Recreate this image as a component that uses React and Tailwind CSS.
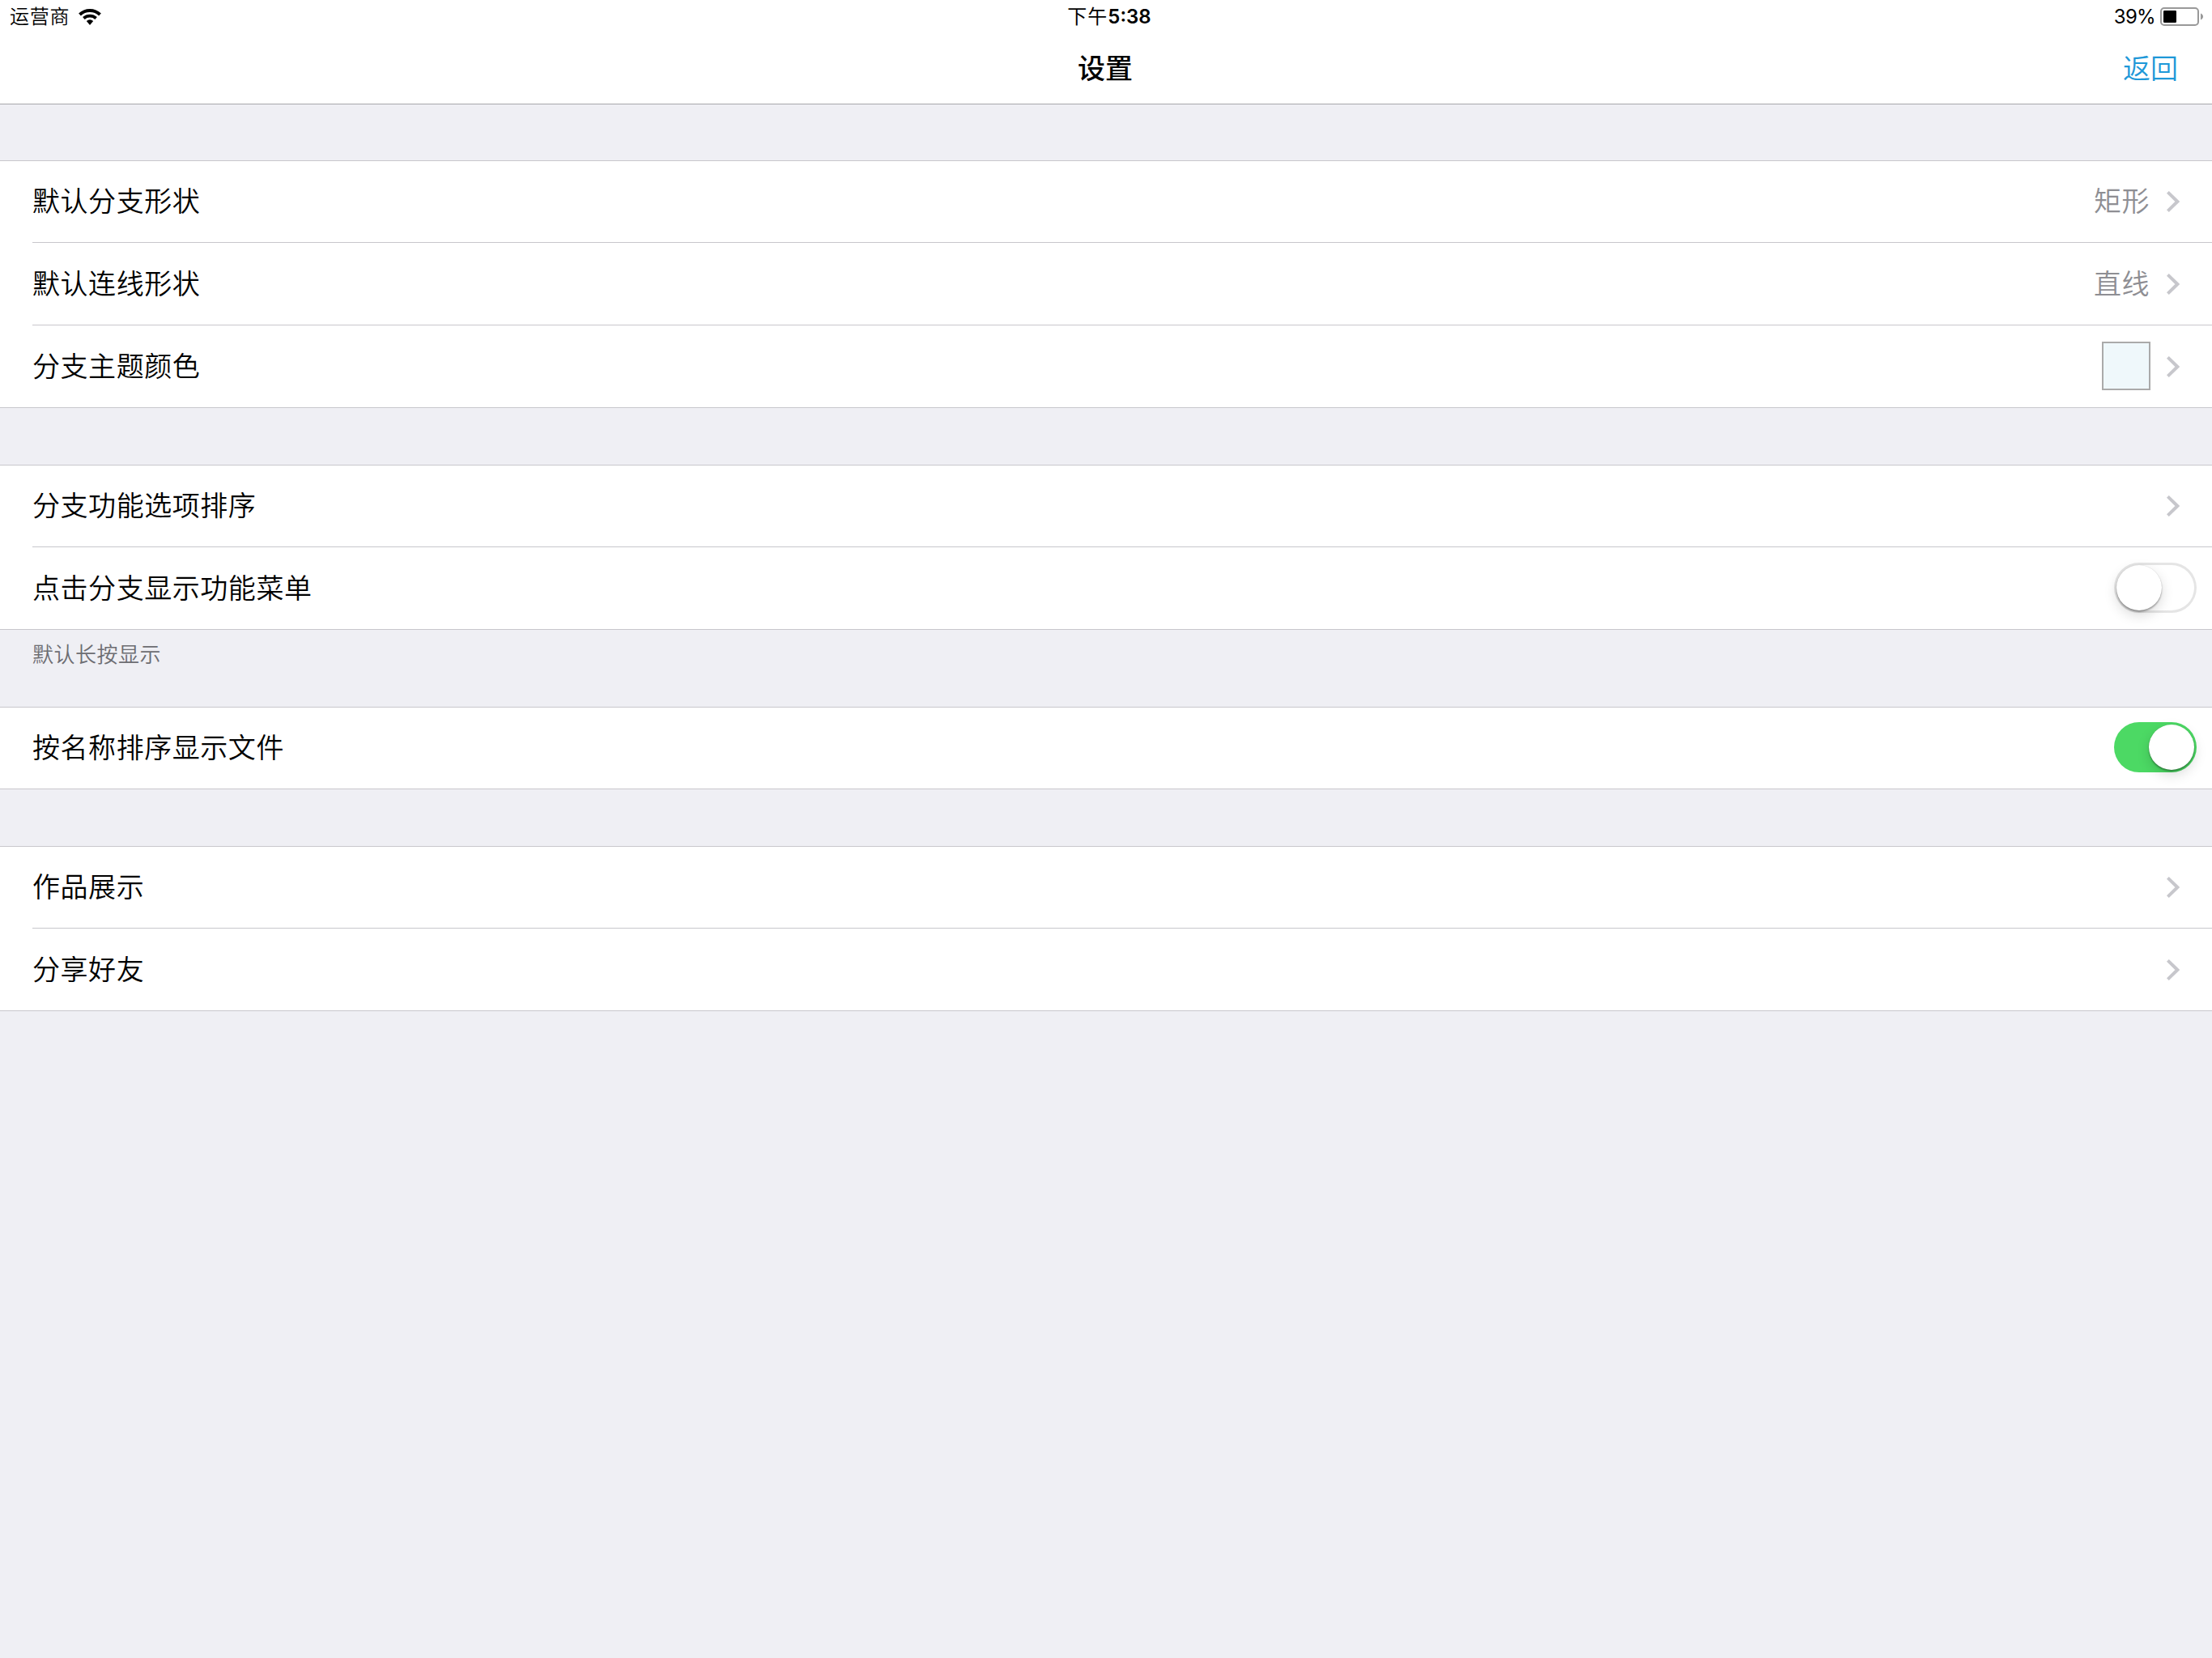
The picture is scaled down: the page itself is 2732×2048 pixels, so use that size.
const groups = [
  {
    className: 'mt-[69px]',
    rows: [
      { label: '默认分支形状', value: '矩形', chevron: true },
      { label: '默认连线形状', value: '直线', chevron: true },
      { label: '分支主题颜色', swatch: true, chevron: true },
    ],
  },
  {
    className: 'mt-[70px]',
    footer: '默认长按显示',
    rows: [
      { label: '分支功能选项排序', chevron: true },
      { label: '点击分支显示功能菜单', toggle: 'off' },
    ],
  },
  { className: '', rows: [{ label: '按名称排序显示文件', toggle: 'on' }] },
  {
    className: 'mt-[70px]',
    rows: [
      { label: '作品展示', chevron: true },
      { label: '分享好友', chevron: true },
    ],
  },
]

function WifiIcon() {
  return (
    <svg width="28" height="20" viewBox="0 0 28 20" fill="none" stroke="#000">
      <path d="M1.5 7.05A18 18 0 0 1 26.5 7.05" strokeWidth="4" />
      <path d="M6.37 11.5A11.4 11.4 0 0 1 21.63 11.5" strokeWidth="3.8" />
      <path d="M9.8 15A6.5 6.5 0 0 1 18.2 15L14 20Z" fill="#000" stroke="none" />
    </svg>
  )
}

function BatteryIcon() {
  return (
    <svg width="54" height="24" viewBox="0 0 54 24" fill="none">
      <rect x="1" y="1" width="46" height="21" rx="4" stroke="#999" strokeWidth="2" />
      <rect x="4" y="4" width="16" height="15" rx="1.2" fill="#000" />
      <path d="M50 7.5C54 9 54 14 50 15.5Z" fill="#999" />
    </svg>
  )
}

function Chevron() {
  return (
    <svg className="mt-0.5" width="16" height="26" viewBox="0 0 16 26" fill="none">
      <path d="M1.4 1.4L13.3 13L1.4 24.6" stroke="#c7c7cc" strokeWidth="4" />
    </svg>
  )
}

function Switch({ on }) {
  return (
    <div
      className={`flex h-[62px] w-[102px] rounded-full p-[3px] ${
        on ? 'justify-end bg-[#4cd964]' : 'justify-start bg-white shadow-[inset_0_0_0_3px_#e5e5e5]'
      }`}
    >
      <div className="size-14 rounded-full bg-white shadow-[0_6px_16px_rgba(0,0,0,0.15),0_2px_2px_rgba(0,0,0,0.3),0_0_1px_rgba(0,0,0,0.2)]" />
    </div>
  )
}

function Row({ row, last }) {
  return (
    <div
      className={`ml-10 flex h-[102px] items-center justify-between pb-0.5 ${
        row.toggle ? 'pr-[19px]' : 'pr-10'
      } ${last ? '' : 'shadow-[inset_0_-1px_0_#c8c7cc]'}`}
    >
      <span className="pt-px text-[34px] leading-[50px] font-[350] tracking-[0.55px]">{row.label}</span>
      <div className="flex items-center gap-5">
        {row.value && (
          <span className="pt-px pr-px text-[34px] leading-[50px] font-[350] tracking-[0.55px] text-[#8e8e93]">
            {row.value}
          </span>
        )}
        {row.swatch && <div className="size-[60px] border-2 border-[#aaa] bg-[#eff8fb]" />}
        {row.chevron && <Chevron />}
        {row.toggle && <Switch on={row.toggle === 'on'} />}
      </div>
    </div>
  )
}

export default function App() {
  return (
    <div className="h-[2048px] w-[2732px] overflow-hidden bg-[#efeff4] font-['Inter','Noto_Sans_CJK_SC',sans-serif] text-black">
      <header className="h-[129px] border-b border-[#a7a7aa] bg-white">
        {/* Status bar */}
        <div className="grid h-[41px] grid-cols-3 items-center pr-[10px] pl-3 text-2xl leading-[41px]">
          <div className="flex items-center gap-[11px]">
            <span className="font-[350] tracking-[0.8px]">运营商</span>
            <WifiIcon />
          </div>
          <div className="pl-1.5 text-center font-semibold">
            <span className="font-normal tracking-[1px]">下午</span>5:38
          </div>
          <div className="flex items-center justify-end gap-1.5">
            <span className="tracking-[-0.7px]">39%</span>
            <BatteryIcon />
          </div>
        </div>

        {/* Nav bar */}
        <div className="grid h-[86px] grid-cols-3 items-center pr-[42px] pl-10 text-[34px]">
          <div />
          <h1 className="text-center font-medium">设置</h1>
          <button className="justify-self-end font-[350] text-[#1e98d8]">返回</button>
        </div>
      </header>

      {groups.map((group) => (
        <section key={group.rows[0].label} className={group.className}>
          <div className="bg-white shadow-[inset_0_1px_0_#c8c7cc,inset_0_-1px_0_#c8c7cc]">
            {group.rows.map((row, i) => (
              <Row key={row.label} row={row} last={i === group.rows.length - 1} />
            ))}
          </div>
          {group.footer && (
            <p className="h-[95px] pt-3 pl-10 text-[26px] leading-[38px] font-[350] tracking-[0.5px] text-[#6d6d72]">
              {group.footer}
            </p>
          )}
        </section>
      ))}
    </div>
  )
}
